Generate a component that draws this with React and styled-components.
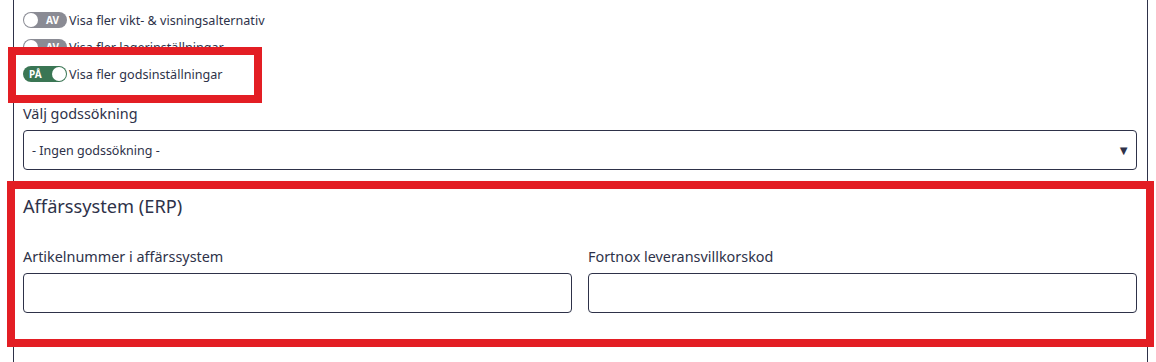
import React from "react";
import styled, {createGlobalStyle} from "styled-components";

const GlobalStyle = createGlobalStyle`
  html, body {
    margin: 0;
    padding: 0;
    background: #ffffff;
  }
  body {
    font-family: "Noto Sans", "Open Sans", sans-serif;
    color: #2e3249;
  }
`;

const toggles = [
    {id: "vikt", label: "Visa fler vikt- & visningsalternativ", on: false},
    {id: "lager", label: "Visa fler lagerinställningar", on: false},
    {id: "gods", label: "Visa fler godsinställningar", on: true},
];

const App = () => {
    return (
        <>
            <GlobalStyle/>
            <Page>
                <Panel>
                    <ToggleList>
                        {toggles.map((t) => (
                            <ToggleRow key={t.id}>
                                <Switch $on={t.on}>
                                    {t.on ? (
                                        <>
                                            <SwitchText>PÅ</SwitchText>
                                            <Knob/>
                                        </>
                                    ) : (
                                        <>
                                            <Knob/>
                                            <SwitchText>AV</SwitchText>
                                        </>
                                    )}
                                </Switch>
                                <ToggleLabel>{t.label}</ToggleLabel>
                            </ToggleRow>
                        ))}
                    </ToggleList>

                    <FieldLabel $top={21}>Välj godssökning</FieldLabel>
                    <Select>
                        <span>- Ingen godssökning -</span>
                        <Arrow>▼</Arrow>
                    </Select>

                    <SectionTitle>Affärssystem (ERP)</SectionTitle>

                    <FieldGrid>
                        <div>
                            <FieldLabel>Artikelnummer i affärssystem</FieldLabel>
                            <Input/>
                        </div>
                        <div>
                            <FieldLabel>Fortnox leveransvillkorskod</FieldLabel>
                            <Input/>
                        </div>
                    </FieldGrid>
                </Panel>

                <Highlight $left={8} $top={47} $width={254} $height={56}/>
                <Highlight $left={7} $top={181} $width={1147} $height={166}/>
            </Page>
        </>
    );
};

const Page = styled.div`
  position: relative;
  width: 1156px;
  height: 362px;
  overflow: hidden;
`;

const Panel = styled.div`
  box-sizing: border-box;
  margin-left: 13px;
  width: 1135px;
  height: 362px;
  border-left: 1px solid #2e3249;
  border-right: 1px solid #2e3249;
  padding: 12px 10px 0 9px;
`;

const ToggleList = styled.div`
  display: flex;
  flex-direction: column;
  gap: 11px;
`;

const ToggleRow = styled.div`
  display: flex;
  align-items: center;
  height: 16px;
`;

const Switch = styled.div`
  display: flex;
  align-items: center;
  justify-content: space-between;
  flex-shrink: 0;
  box-sizing: border-box;
  width: 44px;
  height: 16px;
  border-radius: 8px;
  padding: ${(p) => (p.$on ? "0 1px 0 6px" : "0 8px 0 1px")};
  background: ${(p) => (p.$on ? "#3a7654" : "#8a8b94")};
`;

const Knob = styled.span`
  width: 14px;
  height: 14px;
  border-radius: 50%;
  background: #ffffff;
`;

const SwitchText = styled.span`
  font-size: 10px;
  font-weight: 700;
  color: #ffffff;
  line-height: 1;
`;

const ToggleLabel = styled.span`
  margin-left: 2px;
  font-size: 12.6px;
  color: #2e3249;
`;

const FieldLabel = styled.div`
  margin-top: ${(p) => p.$top || 0}px;
  font-size: 14.4px;
  line-height: 22px;
  color: #2e3249;
`;

const Select = styled.div`
  display: flex;
  align-items: center;
  justify-content: space-between;
  box-sizing: border-box;
  margin-top: 5px;
  height: 40px;
  padding: 0 6px 0 8px;
  border: 1px solid #2e3249;
  border-radius: 4px;
  font-size: 12.5px;
  color: #2e3249;
`;

const Arrow = styled.span`
  font-size: 13px;
  color: #2e3249;
`;

const SectionTitle = styled.div`
  margin-top: 23px;
  font-size: 18.2px;
  line-height: 26px;
  color: #2e3249;
`;

const FieldGrid = styled.div`
  display: grid;
  grid-template-columns: 1fr 1fr;
  gap: 16px;
  margin-top: 27px;
`;

const Input = styled.div`
  box-sizing: border-box;
  margin-top: 5px;
  height: 40px;
  border: 1px solid #2e3249;
  border-radius: 4px;
`;

const Highlight = styled.div`
  position: absolute;
  left: ${(p) => p.$left}px;
  top: ${(p) => p.$top}px;
  width: ${(p) => p.$width}px;
  height: ${(p) => p.$height}px;
  box-sizing: border-box;
  border: 8px solid #e31e24;
  pointer-events: none;
`;

export default App;
